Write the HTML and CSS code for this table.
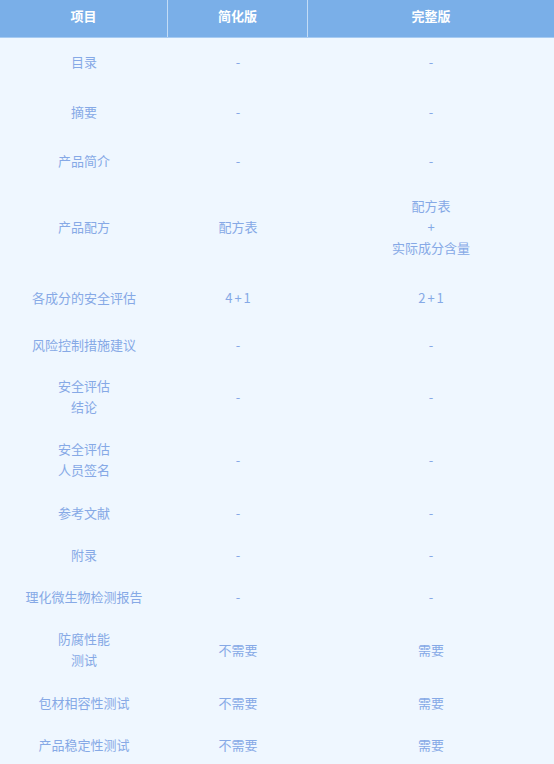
FILE: index.html
```html
<!DOCTYPE html>
<html lang="zh">
<head>
<meta charset="utf-8">
<link rel="stylesheet" href="styles.css">
</head>
<body>
<div class="table">
  <div class="head">
    <div class="hc">项目</div>
    <div class="hc">简化版</div>
    <div class="hc last">完整版</div>
  </div>
  <div class="body">
    <div class="c">目录</div><div class="c">-</div><div class="c">-</div>
    <div class="c">摘要</div><div class="c">-</div><div class="c">-</div>
    <div class="c">产品简介</div><div class="c">-</div><div class="c">-</div>
    <div class="c">产品配方</div><div class="c">配方表</div><div class="c">配方表<br>+<br>实际成分含量</div>
    <div class="c">各成分的安全评估</div><div class="c num">4+1</div><div class="c num">2+1</div>
    <div class="c">风险控制措施建议</div><div class="c">-</div><div class="c">-</div>
    <div class="c">安全评估<br>结论</div><div class="c">-</div><div class="c">-</div>
    <div class="c">安全评估<br>人员签名</div><div class="c">-</div><div class="c">-</div>
    <div class="c">参考文献</div><div class="c">-</div><div class="c">-</div>
    <div class="c">附录</div><div class="c">-</div><div class="c">-</div>
    <div class="c">理化微生物检测报告</div><div class="c">-</div><div class="c">-</div>
    <div class="c">防腐性能<br>测试</div><div class="c">不需要</div><div class="c">需要</div>
    <div class="c">包材相容性测试</div><div class="c">不需要</div><div class="c">需要</div>
    <div class="c">产品稳定性测试</div><div class="c">不需要</div><div class="c">需要</div>
  </div>
</div>
</body>
</html>
```
FILE: styles.css
```css
html, body {
  margin: 0;
  padding: 0;
  background: #eff7ff;
}
body {
  font-family: "Noto Sans CJK SC", "Noto Sans", sans-serif;
  font-size: 13px;
  width: 554px;
}
.table {
  width: 554px;
}
.head {
  display: grid;
  grid-template-columns: 168px 140px 1fr;
  height: 37px;
  background: #7aafe8;
  border-bottom: 1px solid #a6cbf2;
}
.hc {
  color: #ffffff;
  font-weight: bold;
  text-align: center;
  line-height: 21px;
  padding-top: 5px;
  border-right: 1px solid #c3dcf6;
}
.hc.last {
  border-right: none;
}
.body {
  display: grid;
  grid-template-columns: 168px 140px 1fr;
  grid-template-rows: 47px 53px 44px 88px 54px 40px 64px 62px 44px 40px 44px 62px 44px 40px;
}
.c {
  display: flex;
  align-items: center;
  justify-content: center;
  text-align: center;
  line-height: 21px;
  color: #86a9e6;
}
.num {
  letter-spacing: 2px;
  padding-left: 2px;
}
```
